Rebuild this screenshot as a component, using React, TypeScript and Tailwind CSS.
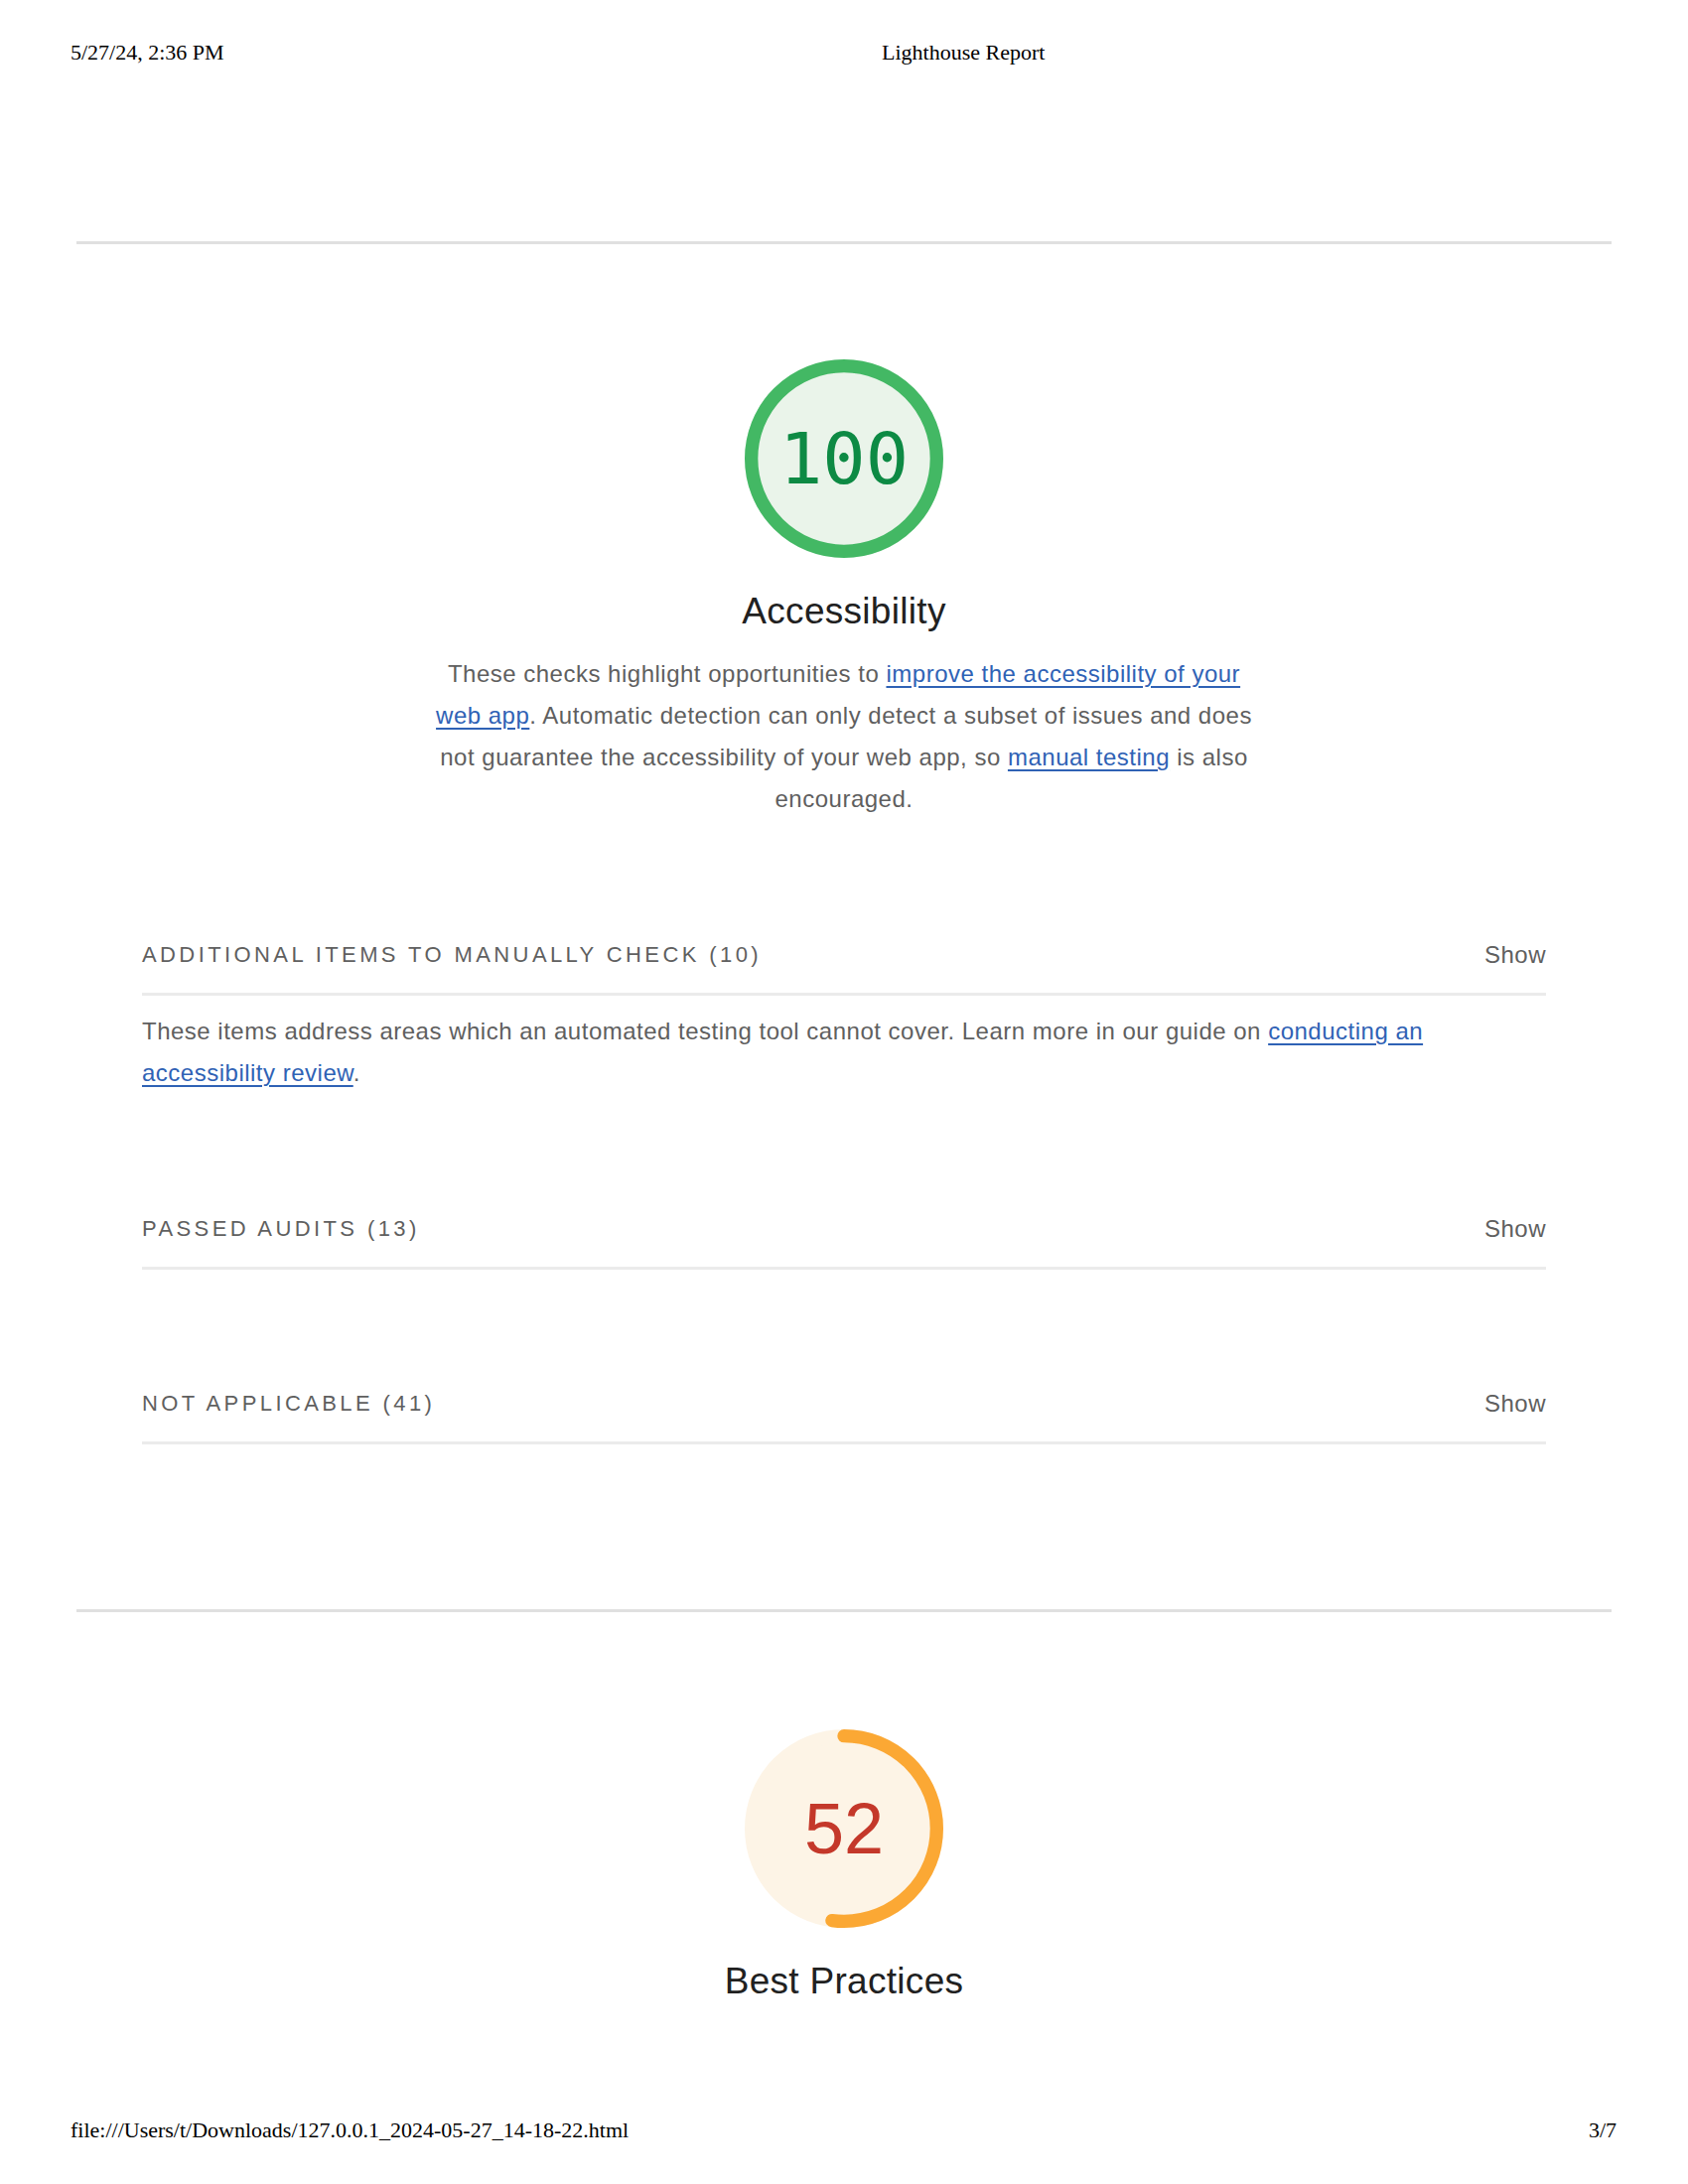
import React from "react";

const SANS = "font-['Liberation_Sans',Arial,Helvetica,sans-serif]";
const SERIF = "font-['Liberation_Serif','Times_New_Roman',serif]";

const LINK =
  "text-[#2f62b5] underline decoration-[2px] underline-offset-[4px] decoration-[#2f62b5]";

type GaugeProps = {
  score: number;
  ring: string;
  fill: string;
  text: string;
  mono?: boolean;
};

function Gauge({ score, ring, fill, text, mono }: GaugeProps) {
  const circ = 2 * Math.PI * 56;
  const dash = (score / 100) * circ;
  return (
    <div className="relative w-[200px] h-[200px] mx-auto">
      <svg viewBox="0 0 120 120" className="w-[200px] h-[200px]">
        <circle cx="60" cy="60" r="56" fill={fill} stroke={fill} strokeWidth="8" />
        <circle
          cx="60"
          cy="60"
          r="56"
          fill="none"
          stroke={ring}
          strokeWidth="8"
          strokeLinecap={score < 100 ? "round" : "butt"}
          strokeDasharray={`${dash} ${circ}`}
          transform="rotate(-90 60 60)"
        />
      </svg>
      <div
        className={`absolute inset-0 flex items-center justify-center text-[72px] leading-none ${
          mono ? "font-['DejaVu_Sans_Mono',monospace]" : SANS
        }`}
        style={{ color: text }}
      >
        {score}
      </div>
    </div>
  );
}

function GroupHeader({ title, count, mt }: { title: string; count: number; mt: string }) {
  return (
    <div
      className={`${mt} w-[1414px] mx-auto flex items-center justify-between pb-[26px] border-b-[3px] border-[#ebebeb] text-[#5f5f5f]`}
    >
      <span className="text-[22px] leading-[24px] tracking-[3.4px] uppercase">
        {title} ({count})
      </span>
      <span className="text-[24px] leading-[24px] tracking-[0.5px]">Show</span>
    </div>
  );
}

export default function App() {
  return (
    <div className={`w-[1700px] h-[2200px] bg-white flex flex-col ${SANS}`}>
      {/* print header */}
      <div className={`mt-[40px] h-[26px] flex text-[22px] leading-[26px] text-black ${SERIF}`}>
        <span className="ml-[71px] w-[817px]">5/27/24, 2:36 PM</span>
        <span>Lighthouse Report</span>
      </div>

      <div className="mt-[177px] w-[1546px] mx-auto h-[3px] bg-[#e0e0e0]" />

      {/* accessibility */}
      <div className="mt-[116px]">
        <Gauge score={100} ring="#43b864" fill="#eaf4ea" text="#0d8a44" mono />
      </div>
      <h2 className="mt-[32px] text-center text-[37px] leading-[44px] tracking-[0.3px] text-[#212121]">
        Accessibility
      </h2>
      <p className="mt-[20px] w-[840px] mx-auto text-center text-[24px] leading-[42px] tracking-[0.5px] text-[#5f5f5f]">
        These checks highlight opportunities to{" "}
        <a className={LINK}>improve the accessibility of your web app</a>. Automatic
        detection can only detect a subset of issues and does not guarantee the
        accessibility of your web app, so <a className={LINK}>manual testing</a> is also
        encouraged.
      </p>

      <GroupHeader title="Additional items to manually check" count={10} mt="mt-[124px]" />
      <p className="mt-[15px] w-[1414px] mx-auto text-[24px] leading-[42px] tracking-[0.5px] text-[#5f5f5f]">
        These items address areas which an automated testing tool cannot cover. Learn more
        in our guide on <a className={LINK}>conducting an accessibility review</a>.
      </p>

      <GroupHeader title="Passed audits" count={13} mt="mt-[124px]" />
      <GroupHeader title="Not applicable" count={41} mt="mt-[123px]" />

      <div className="mt-[166px] w-[1546px] mx-auto h-[3px] bg-[#e0e0e0]" />

      {/* best practices */}
      <div className="mt-[118px]">
        <Gauge score={52} ring="#fba834" fill="#fdf4e6" text="#c4382a" />
      </div>
      <h2 className="mt-[32px] text-center text-[37px] leading-[44px] tracking-[0.3px] text-[#212121]">
        Best Practices
      </h2>

      {/* print footer */}
      <div
        className={`mt-[115px] h-[26px] flex justify-between pl-[71px] pr-[72px] text-[22px] leading-[26px] text-black ${SERIF}`}
      >
        <span>file:///Users/t/Downloads/127.0.0.1_2024-05-27_14-18-22.html</span>
        <span>3/7</span>
      </div>
    </div>
  );
}
